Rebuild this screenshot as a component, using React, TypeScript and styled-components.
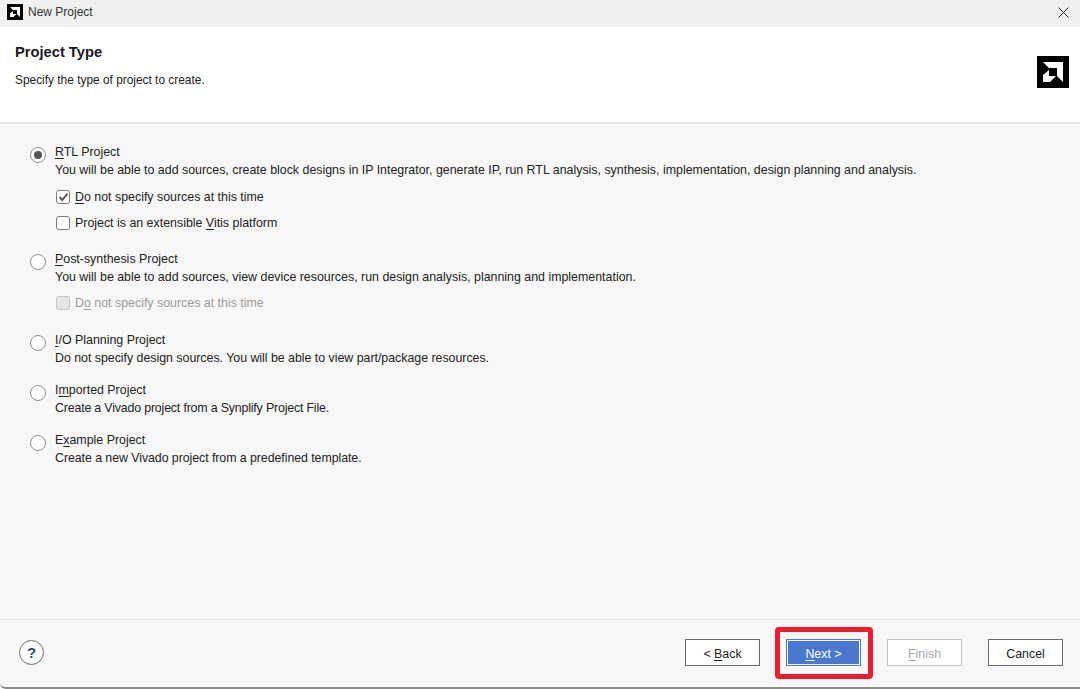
import React from 'react';
import styled, { createGlobalStyle } from 'styled-components';

const GlobalStyle = createGlobalStyle`
  html, body {
    margin: 0;
    padding: 0;
    background: #f7f7f7;
  }
  * {
    box-sizing: border-box;
  }
`;

const Dialog = styled.div`
  width: 1080px;
  height: 689px;
  display: flex;
  flex-direction: column;
  overflow: hidden;
  background: #f7f7f7;
  color: #222;
  font-family: "Liberation Sans", Arial, sans-serif;
  font-size: 12.4px;
  border-bottom: 2px solid #8c8c8c;
  border-bottom-left-radius: 6px;
`;

const TitleBar = styled.div`
  height: 27px;
  flex: none;
  display: flex;
  align-items: center;
  gap: 5px;
  padding: 0 11px 3px 7px;
  background: #f0f0f0;
  color: #333;
`;

const TitleText = styled.span`
  flex: 1;
  font-size: 12px;
`;

const CloseButton = styled.button`
  display: flex;
  padding: 0;
  border: 0;
  background: none;
  color: #222;
`;

const Header = styled.header`
  height: 97px;
  flex: none;
  display: flex;
  justify-content: space-between;
  padding: 16px 11px 0 15px;
  background: #fff;
  border-bottom: 2px solid #e8e8e8;
`;

const Heading = styled.h1`
  margin: 0 0 10px;
  font-size: 14.7px;
  line-height: 18px;
  font-weight: bold;
  color: #1c1524;
`;

const SubHeading = styled.p`
  margin: 0;
  line-height: 18px;
  font-size: 11.9px;
`;

const LogoBox = styled.div`
  display: flex;
  margin-top: 13px;
`;

const Options = styled.main`
  flex: 1;
  display: flex;
  flex-direction: column;
  gap: 14px;
  padding: 19px 0 0 30px;
`;

const Option = styled.section`
  display: grid;
  grid-template-columns: 16px 1fr;
  column-gap: 9px;
`;

const Radio = styled.span<{ $checked?: boolean }>`
  width: 16px;
  height: 16px;
  margin-top: 4px;
  display: flex;
  align-items: center;
  justify-content: center;
  border-radius: 50%;
  background: #fff;
  border: 1.5px solid #8f8f8f;

  &::after {
    content: "";
    display: ${p => (p.$checked ? 'block' : 'none')};
    width: 8px;
    height: 8px;
    border-radius: 50%;
    background: #555;
  }
`;

const OptionBody = styled.div`
  display: flex;
  flex-direction: column;
`;

const OptionTitle = styled.div`
  line-height: 18px;
`;

const OptionText = styled.div<{ $spacing?: number }>`
  line-height: 18px;
  letter-spacing: ${p => p.$spacing ?? 0}px;
`;

const CheckList = styled.div<{ $tight?: boolean }>`
  display: flex;
  flex-direction: column;
  gap: 8px;
  margin-top: ${p => (p.$tight ? '8px' : '9px')};
  padding-bottom: ${p => (p.$tight ? '5px' : '4px')};
`;

const CheckRow = styled.div<{ $disabled?: boolean }>`
  display: flex;
  align-items: center;
  gap: 5px;
  height: 18px;
  color: ${p => (p.$disabled ? '#9a9a9a' : '#222')};
`;

const CheckBox = styled.span<{ $disabled?: boolean }>`
  width: 14px;
  height: 14px;
  margin-left: 1px;
  display: flex;
  align-items: center;
  justify-content: center;
  border-radius: 3px;
  background: ${p => (p.$disabled ? '#e6e6e6' : '#fff')};
  border: 1px solid ${p => (p.$disabled ? '#c4c4c4' : '#7b7b7b')};
`;

const Key = styled.span`
  text-decoration: underline;
  text-underline-offset: 2px;
`;

const Footer = styled.footer`
  height: 68px;
  flex: none;
  display: flex;
  align-items: center;
  justify-content: space-between;
  padding: 0 17px 2px 19px;
  border-top: 1px solid #e2e2e2;
`;

const HelpButton = styled.button`
  width: 25px;
  height: 25px;
  padding: 0;
  display: flex;
  align-items: center;
  justify-content: center;
  border-radius: 50%;
  border: 1px solid #6e6e6e;
  background: #fff;
  color: #34496e;
  font-family: "Liberation Sans", Arial, sans-serif;
  font-size: 15px;
  font-weight: bold;
`;

const ButtonRow = styled.div`
  display: flex;
  gap: 26px;
`;

const ActionButton = styled.button<{ $primary?: boolean }>`
  width: 75px;
  height: 27px;
  padding: 2px 0 0;
  position: relative;
  font-family: "Liberation Sans", Arial, sans-serif;
  font-size: 12.4px;
  color: ${p => (p.$primary ? '#fff' : '#222')};
  background: ${p => (p.$primary ? '#4a78cf' : '#fff')};
  border: 1px solid ${p => (p.$primary ? '#4a78cf' : '#6b6b6b')};
  box-shadow: ${p => (p.$primary ? 'inset 0 0 0 1px #fff' : 'none')};

  &:disabled {
    color: #a8a8a8;
    border-color: #c2c2c2;
  }
`;

const Highlight = styled.span`
  position: absolute;
  left: -12px;
  top: -13px;
  width: 98px;
  height: 52px;
  border: 5px solid #ed1c2e;
  border-radius: 4px;
  pointer-events: none;
`;

const AmdLogo = ({ size }: { size: number }) => (
  <svg width={size} height={size} viewBox="0 0 32 32">
    <rect width="32" height="32" fill="#000" />
    <path d="M6 6H26V26L20 20V12H12Z" fill="#fff" />
    <path d="M12 14V20H19L13 26H6V19Z" fill="#fff" />
  </svg>
);

export default function App() {
  return (
    <React.Fragment>
      <GlobalStyle />
      <Dialog>
        <TitleBar>
          <AmdLogo size={16} />
          <TitleText>New Project</TitleText>
          <CloseButton aria-label="Close">
            <svg width="11" height="11" viewBox="0 0 11 11">
              <path d="M.5.5l10 10M10.5.5l-10 10" stroke="currentColor" strokeWidth="1" fill="none" />
            </svg>
          </CloseButton>
        </TitleBar>
        <Header>
          <div>
            <Heading>Project Type</Heading>
            <SubHeading>Specify the type of project to create.</SubHeading>
          </div>
          <LogoBox>
            <AmdLogo size={32} />
          </LogoBox>
        </Header>
        <Options>
          <Option>
            <Radio $checked />
            <OptionBody>
              <OptionTitle><Key>R</Key>TL Project</OptionTitle>
              <OptionText>
                You will be able to add sources, create block designs in IP Integrator, generate IP, run RTL analysis, synthesis, implementation, design planning and analysis.
              </OptionText>
              <CheckList>
                <CheckRow>
                  <CheckBox>
                    <svg width="11" height="10" viewBox="0 0 11 10">
                      <path d="M1.5 5l2.8 3 5.2-6.5" stroke="#555" strokeWidth="2" fill="none" />
                    </svg>
                  </CheckBox>
                  <span><Key>D</Key>o not specify sources at this time</span>
                </CheckRow>
                <CheckRow>
                  <CheckBox />
                  <span>Project is an extensible <Key>V</Key>itis platform</span>
                </CheckRow>
              </CheckList>
            </OptionBody>
          </Option>
          <Option>
            <Radio />
            <OptionBody>
              <OptionTitle><Key>P</Key>ost-synthesis Project</OptionTitle>
              <OptionText>You will be able to add sources, view device resources, run design analysis, planning and implementation.</OptionText>
              <CheckList $tight>
                <CheckRow $disabled>
                  <CheckBox $disabled />
                  <span>D<Key>o</Key> not specify sources at this time</span>
                </CheckRow>
              </CheckList>
            </OptionBody>
          </Option>
          <Option>
            <Radio />
            <OptionBody>
              <OptionTitle><Key>I</Key>/O Planning Project</OptionTitle>
              <OptionText $spacing={-0.025}>Do not specify design sources. You will be able to view part/package resources.</OptionText>
            </OptionBody>
          </Option>
          <Option>
            <Radio />
            <OptionBody>
              <OptionTitle>I<Key>m</Key>ported Project</OptionTitle>
              <OptionText $spacing={-0.18}>Create a Vivado project from a Synplify Project File.</OptionText>
            </OptionBody>
          </Option>
          <Option>
            <Radio />
            <OptionBody>
              <OptionTitle>E<Key>x</Key>ample Project</OptionTitle>
              <OptionText $spacing={-0.07}>Create a new Vivado project from a predefined template.</OptionText>
            </OptionBody>
          </Option>
        </Options>
        <Footer>
          <HelpButton aria-label="Help">?</HelpButton>
          <ButtonRow>
            <ActionButton>&lt; <Key>B</Key>ack</ActionButton>
            <ActionButton $primary>
              <Key>N</Key>ext &gt;
              <Highlight />
            </ActionButton>
            <ActionButton disabled><Key>F</Key>inish</ActionButton>
            <ActionButton>Cancel</ActionButton>
          </ButtonRow>
        </Footer>
      </Dialog>
    </React.Fragment>
  );
}
